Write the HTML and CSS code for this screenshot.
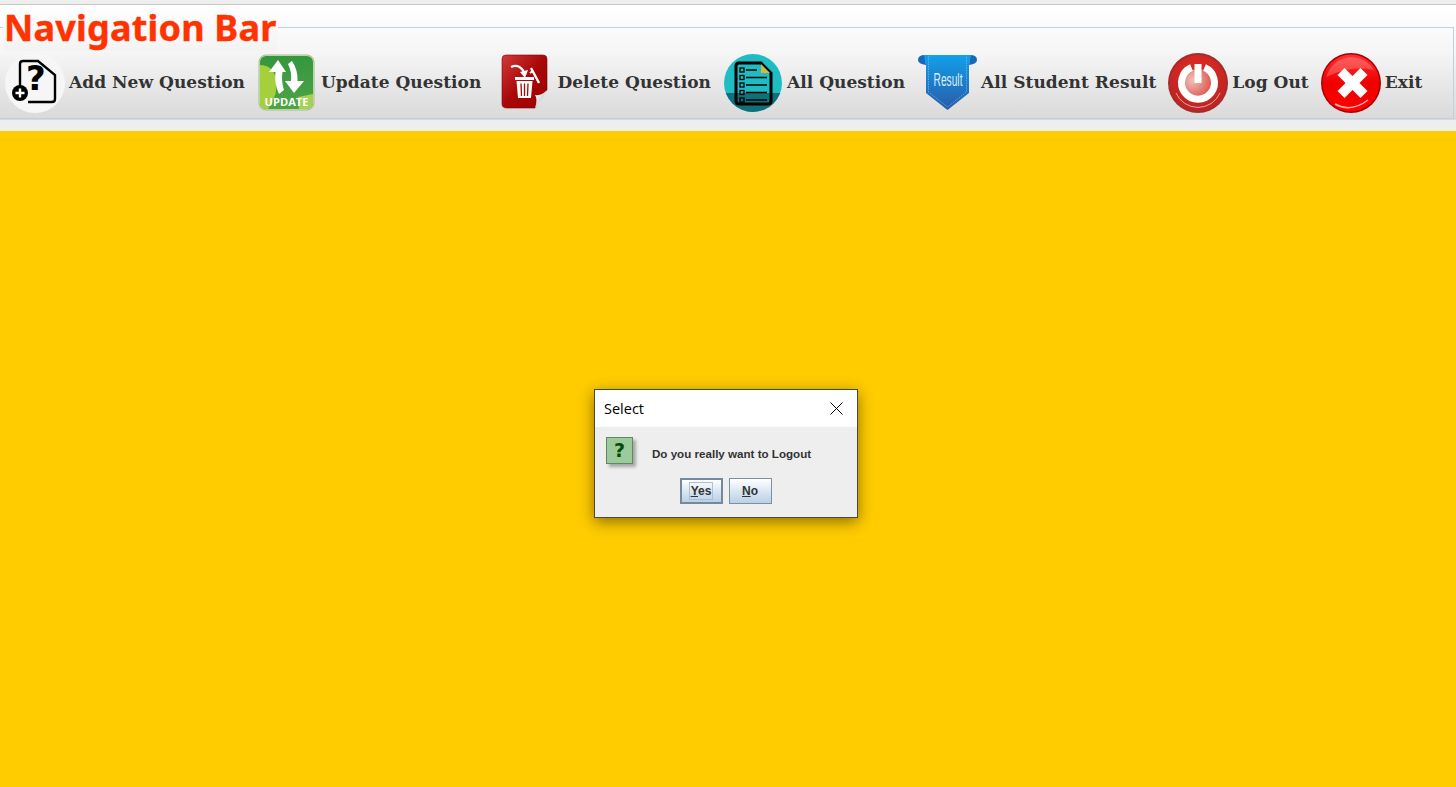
FILE: index.html
```html
<!DOCTYPE html>
<html lang="en">
<head>
<meta charset="utf-8">
<title>Navigation Bar</title>
<link rel="stylesheet" href="styles.css">
</head>
<body>
<header class="header">
  <div class="chrome">
    <h1 class="title">Navigation Bar</h1>
    <nav class="menubar">
      <a class="item">
        <svg class="icon" viewBox="0 0 60 60">
          <circle cx="30" cy="30" r="30" fill="#f6f6f6"/>
          <path d="M15 33V11q0-3 3-3H33L50 22V46q0 3-3 3H23" fill="none" stroke="#000" stroke-width="2.400"/>
          <text x="31" y="37" class="glyph-q" text-anchor="middle">?</text>
          <circle cx="15" cy="40" r="8" fill="#000"/>
          <path d="M10.500 40h9M15 35.500v9" stroke="#fff" stroke-width="2.400"/>
        </svg>
        <span>Add New Question</span>
      </a>
      <a class="item">
        <svg class="icon" viewBox="0 0 60 60">
          <defs>
            <linearGradient id="g2" x1="0" y1="0" x2="0" y2="1"><stop offset="0" stop-color="#35963f"/><stop offset="1" stop-color="#4da545"/></linearGradient>
            <clipPath id="c2"><rect x="3" y="3" width="53" height="53" rx="6"/></clipPath>
          </defs>
          <rect x="2" y="2" width="55" height="55" rx="7" fill="#d8e8c0" stroke="#9dbf86"/>
          <g clip-path="url(#c2)">
            <rect x="3" y="3" width="53" height="53" fill="url(#g2)"/>
            <path d="M3 12Q16 12 19 26T11 56H3Z" fill="#a6cf3c"/>
            <path d="M41 44 56 41V56H42Z" fill="#a6cf55"/>
          </g>
          <path d="M21 7 29 19H25.500Q24 28 27 37L22 41Q17 30 18.500 19H12Z" fill="#fff"/>
          <path d="M31 11 35 8Q41 17 40.500 28H47L37 40 28 28H34Q35 19 31 11Z" fill="#fff"/>
          <text x="29.500" y="53" class="glyph-up" text-anchor="middle" textLength="44" lengthAdjust="spacingAndGlyphs">UPDATE</text>
        </svg>
        <span>Update Question</span>
      </a>
      <a class="item">
        <svg class="icon" viewBox="0 0 60 60">
          <defs>
            <linearGradient id="g3" x1="0" y1="0" x2="1" y2="1"><stop offset="0" stop-color="#d23a3a"/><stop offset=".5" stop-color="#a80808"/><stop offset="1" stop-color="#9b0000"/></linearGradient>
            <linearGradient id="g3c" x1="0" y1="0" x2="1" y2="1"><stop offset="0" stop-color="#ffffff"/><stop offset="1" stop-color="#b5b5b5"/></linearGradient>
          </defs>
          <path d="M13 2H50q4 0 4 4V37Q46 44 42 55L14 55q-5 0-5-4V6q0-4 4-4Z" fill="url(#g3)" stroke="#7d0505" stroke-width=".6"/>
          <path d="M54 37Q50 46 42 55Q45 46 42 42Q49 43 54 37Z" fill="url(#g3c)"/>
          <path d="M18 14Q26 10 31 19" fill="none" stroke="#fff" stroke-width="2.200"/>
          <path d="M27 19 35 17 32 25Z" fill="#fff"/>
          <path d="M38 15 46 30" stroke="#fff" stroke-width="2.400"/>
          <path d="M37 20l3-2" stroke="#fff" stroke-width="2"/>
          <rect x="22" y="24" width="19" height="3" fill="#fff"/>
          <path d="M23.500 28H39.500L38 45H25Z" fill="#fff"/>
          <path d="M28 30.500 28.500 43M31.500 30.500V43M35 30.500 34.500 43" stroke="#a80808" stroke-width="1.300"/>
        </svg>
        <span>Delete Question</span>
      </a>
      <a class="item">
        <svg class="icon" viewBox="0 0 60 60">
          <defs><clipPath id="c4"><circle cx="30" cy="30" r="29"/></clipPath></defs>
          <circle cx="30" cy="30" r="29" fill="#1fbcc4"/>
          <rect x="0" y="40" width="60" height="20" fill="#0f7078" clip-path="url(#c4)"/>
          <path d="M16 10H38L48 20V48q0 3-3 3H16q-3 0-3-3V13q0-3 3-3Z" fill="none" stroke="#000" stroke-width="3"/>
          <path d="M38 11 47 20H38Z" fill="#d6b938"/>
          <g fill="none" stroke="#000" stroke-width="1.300">
            <rect x="17" y="15" width="4" height="4"/><rect x="17" y="22.500" width="4" height="4"/><rect x="17" y="30" width="4" height="4"/><rect x="17" y="37.500" width="4" height="4"/><rect x="17" y="45" width="4" height="4"/>
          </g>
          <path d="M23 17H34M23 24.500H44M23 32H44M23 39.500H44M23 47H44" stroke="#000" stroke-width="1.600"/>
        </svg>
        <span>All Question</span>
      </a>
      <a class="item">
        <svg class="icon" viewBox="0 0 60 60">
          <defs><linearGradient id="g5" x1="0" y1="0" x2="0" y2="1"><stop offset="0" stop-color="#12a0ea"/><stop offset="1" stop-color="#2a5aa8"/></linearGradient></defs>
          <path d="M8 2Q1 2 1 7Q1 11 9 12Z" fill="#1668b8"/>
          <path d="M53 2Q60 2 60 7Q60 11 52 12Z" fill="#1668b8"/>
          <path d="M7 2H54L52 12V40L30.500 57 9 40V12Z" fill="url(#g5)"/>
          <path d="M11.500 3V39L30.500 54 49.500 39V3" fill="none" stroke="#6fc0ee" stroke-width=".7" stroke-dasharray="1.500 1"/>
          <text x="31" y="33" class="glyph-re" text-anchor="middle" textLength="29" lengthAdjust="spacingAndGlyphs">Result</text>
        </svg>
        <span>All Student Result</span>
      </a>
      <a class="item">
        <svg class="icon" viewBox="0 0 60 60">
          <defs>
            <radialGradient id="g6a" cx=".5" cy=".3" r=".8"><stop offset="0" stop-color="#e22a22"/><stop offset="1" stop-color="#b52424"/></radialGradient>
            <radialGradient id="g6b" cx=".3" cy=".4" r=".8"><stop offset="0" stop-color="#f0c0bc"/><stop offset="1" stop-color="#d94a42"/></radialGradient>
          </defs>
          <circle cx="30" cy="30" r="30" fill="#a92a2a"/>
          <circle cx="30" cy="30" r="28" fill="url(#g6a)"/>
          <circle cx="30" cy="30" r="14" fill="url(#g6b)"/>
          <path d="M23.500 14.500A16.500 16.500 0 1 0 36.500 14.500" fill="none" stroke="#fff" stroke-width="7"/>
          <rect x="26.500" y="11" width="7" height="19" fill="#fff"/>
          <path d="M8 40A24 24 0 0 0 52 40" fill="none" stroke="#f0a09a" stroke-width="1"/>
        </svg>
        <span>Log Out</span>
      </a>
      <a class="item">
        <svg class="icon" viewBox="0 0 60 60">
          <defs>
            <linearGradient id="g7" x1="0" y1="0" x2="0" y2="1"><stop offset="0" stop-color="#ff3030"/><stop offset=".5" stop-color="#f00000"/><stop offset="1" stop-color="#ff0000"/></linearGradient>
          </defs>
          <circle cx="30" cy="30" r="30" fill="#a80000"/>
          <circle cx="30" cy="30" r="28.500" fill="url(#g7)"/>
          <path d="M5 24Q12 5 30 4Q46 5 53 17Q30 12 5 24Z" fill="#fff" opacity=".22"/>
          <path d="M14 51Q30 60 47 47" fill="none" stroke="#ffb0b0" stroke-width="1.500"/>
          <path d="M23.500 15 31.500 23 39.500 15 46.500 22 38.500 30 46.500 38 39.500 45 31.500 37 23.500 45 16.500 38 24.500 30 16.500 22Z" fill="#fff"/>
        </svg>
        <span>Exit</span>
      </a>
    </nav>
  </div>
</header>
<main class="desk">
  <section class="dialog">
    <div class="dialog-head">
      <span>Select</span>
      <svg class="close" viewBox="0 0 13 13"><path d="M.5.5l12 12M12.500.5l-12 12" stroke="#000" fill="none"/></svg>
    </div>
    <div class="dialog-body">
      <div class="message">
        <div class="qicon">?</div>
        <p>Do you really want to Logout</p>
      </div>
      <div class="buttons">
        <button class="btn btn-default"><span class="focus"><u>Y</u>es</span></button>
        <button class="btn"><u>N</u>o</button>
      </div>
    </div>
  </section>
</main>
</body>
</html>
```
FILE: styles.css
```css
* { box-sizing: border-box; }
html, body { margin: 0; height: 100%; }
body {
  display: flex;
  flex-direction: column;
  background: #ffcc00;
  overflow: hidden;
}
.header {
  height: 131px;
  flex: none;
  padding: 4px 0 11px;
  background: #eeeeee;
}
.chrome {
  position: relative;
  height: 116px;
  padding: 22px 2px 0 0;
  border-top: 1px solid #c8c8c8;
  background: linear-gradient(#ffffff 0, #f6f6f6 40%, #d9d9d9 100%);
}
.title {
  position: absolute;
  left: 3px;
  top: 0;
  margin: 0;
  padding: 0 1px;
  width: 275px;
  height: 46px;
  font: bold 36px/46px "Noto Sans", sans-serif;
  letter-spacing: 0.2px;
  -webkit-text-stroke: 0.4px #ff3300;
  color: #ff3300;
  background: linear-gradient(#ffffff, #f3f3f3);
  white-space: nowrap;
}
.menubar {
  height: 92px;
  display: flex;
  align-items: flex-end;
  gap: 12px;
  padding: 0 0 5px 5px;
  border: 1px solid #bfd0e4;
  border-left: 0;
}
.item {
  display: flex;
  align-items: center;
  gap: 4px;
  font: bold 17px "DejaVu Serif", serif;
  letter-spacing: 0.04px;
  color: #333333;
  white-space: nowrap;
}
.item span { margin-bottom: 3px; }
.icon { width: 60px; height: 60px; flex: none; display: block; }
.glyph-q { font: bold 34px "DejaVu Sans", sans-serif; fill: #000; }
.glyph-up { font: bold 11px "Open Sans", sans-serif; fill: #fff; }
.glyph-re { font: 18px "Liberation Sans", sans-serif; fill: #d8ecfa; }
.desk {
  position: relative;
  flex: 1;
  background: #ffcc00;
}
.dialog {
  position: absolute;
  left: 594px;
  top: 258px;
  width: 264px;
  height: 129px;
  border: 1px solid #4a4a3a;
  background: #eeeeee;
  box-shadow: 0 4px 14px rgba(0, 0, 0, 0.45);
  display: flex;
  flex-direction: column;
}
.dialog-head {
  height: 37px;
  flex: none;
  display: flex;
  align-items: center;
  justify-content: space-between;
  padding: 0 14px 0 9px;
  background: #ffffff;
  font: 14.500px "Open Sans", sans-serif;
  color: #000;
}
.close { width: 13px; height: 13px; }
.dialog-body {
  flex: 1;
  padding: 10px 0 0 11px;
  display: flex;
  flex-direction: column;
}
.message { display: flex; align-items: flex-start; gap: 19px; height: 41px; }
.message p {
  margin: 10px 0 0;
  font: bold 11.600px "Liberation Sans", sans-serif;
  color: #333333;
  white-space: nowrap;
}
.qicon {
  width: 27px;
  height: 27px;
  flex: none;
  background: #9cca9c;
  border: 1px solid #5f8a5f;
  box-shadow: 3px 3px 3px rgba(0, 0, 0, 0.3);
  text-align: center;
  font: bold 19px/25px "DejaVu Sans", sans-serif;
  color: #064a06;
}
.buttons { display: flex; justify-content: center; gap: 6px; padding-right: 12px; }
.btn {
  width: 43px;
  height: 26px;
  padding: 0;
  border: 1px solid #7c8fa3;
  background: linear-gradient(#ffffff, #dbe6f2 50%, #b9d0e6);
  font: bold 12px "Liberation Sans", sans-serif;
  color: #333333;
  display: flex;
  align-items: center;
  justify-content: center;
}
.btn-default { border: 2px solid #76899c; }
.focus { display: block; padding: 1px 1px; border: 1px solid #a9c0da; line-height: 14px; }
```
